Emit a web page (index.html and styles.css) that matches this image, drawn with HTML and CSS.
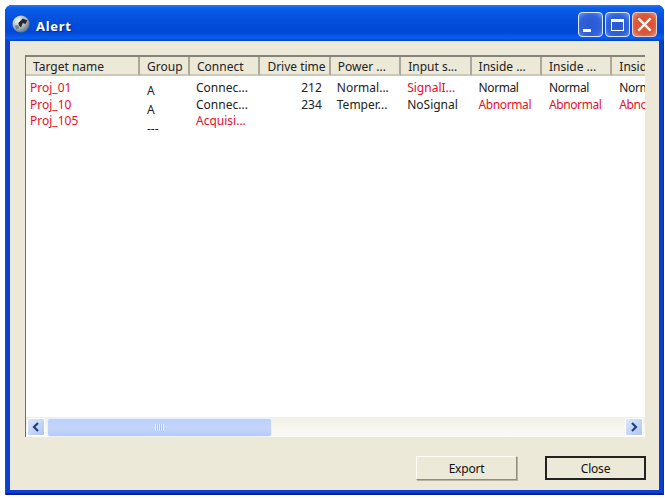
FILE: index.html
```html
<!DOCTYPE html>
<html lang="en">
<head>
<meta charset="utf-8">
<title>Alert</title>
<link rel="stylesheet" href="styles.css">
</head>
<body>
<div class="window">
  <div class="titlebar">
    <svg class="app-icon" width="18" height="18" viewBox="0 0 20 20">
      <defs><radialGradient id="g" cx="35%" cy="30%" r="75%"><stop offset="0" stop-color="#f4f6f8"/><stop offset=".6" stop-color="#a9b4bf"/><stop offset="1" stop-color="#5c6a78"/></radialGradient></defs>
      <circle cx="10" cy="10" r="9.5" fill="url(#g)"/>
      <path d="M7 9 L12 4 L17 6 L15 10 L12 9 L10 14 L8 12 Z" fill="#23262b"/>
      <path d="M3 12 L7 11 L8 15 L5 16 Z" fill="#6f7f90"/>
    </svg>
    <span class="title">Alert</span>
    <div class="caption-buttons">
      <div class="cap cap-min"><span class="min-glyph"></span></div>
      <div class="cap cap-max"><span class="max-glyph"></span></div>
      <div class="cap cap-close">
        <svg width="15" height="15" viewBox="0 0 14 14"><path d="M2 2 L12 12 M12 2 L2 12" stroke="#fff" stroke-width="2.2" stroke-linecap="square"/></svg>
      </div>
    </div>
  </div>
  <div class="client">
    <div class="list">
      <div class="columns">
        <div class="col c-name"><div class="head">Target name</div><div class="cell red">Proj_01</div><div class="cell red">Proj_10</div><div class="cell red">Proj_105</div></div>
        <div class="col c-group"><div class="head">Group</div><div class="cell tall">A</div><div class="cell tall">A</div><div class="cell tall">---</div></div>
        <div class="col c-std"><div class="head">Connect</div><div class="cell">Connec...</div><div class="cell">Connec...</div><div class="cell red">Acquisi...</div></div>
        <div class="col c-std"><div class="head">Drive time</div><div class="cell num">212</div><div class="cell num">234</div></div>
        <div class="col c-std"><div class="head">Power ...</div><div class="cell">Normal...</div><div class="cell">Temper...</div></div>
        <div class="col c-std"><div class="head">Input s...</div><div class="cell red">SignalI...</div><div class="cell">NoSignal</div></div>
        <div class="col c-std"><div class="head">Inside ...</div><div class="cell tight">Normal</div><div class="cell red tight">Abnormal</div></div>
        <div class="col c-std"><div class="head">Inside ...</div><div class="cell tight">Normal</div><div class="cell red tight">Abnormal</div></div>
        <div class="col c-last"><div class="head">Inside ...</div><div class="cell tight">Normal</div><div class="cell red tight">Abnormal</div></div>
      </div>
      <div class="hscroll">
        <div class="sbtn"><svg width="10" height="10" viewBox="0 0 10 10"><path d="M7 1 L3 5 L7 9" fill="none" stroke="#24407c" stroke-width="2.2"/></svg></div>
        <div class="thumb"><span class="grip"></span></div>
        <div class="track"></div>
        <div class="sbtn"><svg width="10" height="10" viewBox="0 0 10 10"><path d="M3 1 L7 5 L3 9" fill="none" stroke="#24407c" stroke-width="2.2"/></svg></div>
      </div>
    </div>
    <div class="actions">
      <button class="btn">Export</button>
      <button class="btn btn-default">Close</button>
    </div>
  </div>
</div>
</body>
</html>
```
FILE: styles.css
```css
html, body { margin: 0; padding: 0; background: #fff; }
body { width: 665px; height: 498px; overflow: hidden; font-family: "Noto Sans", "Liberation Sans", sans-serif; font-size: 12px; color: #111; }
.window { margin: 5px 0 0 5px; width: 659px; height: 490px; display: flex; flex-direction: column; background: #0a3fd0; border-radius: 7px 7px 0 0; box-shadow: inset 1px 0 0 #0a50e0, inset -1px 0 0 #0a2fa8, inset 0 -2px 0 #00209a; }
.titlebar { height: 36px; flex: none; display: flex; align-items: center; padding: 0 7px; border-radius: 7px 7px 0 0; box-sizing: border-box; background: linear-gradient(#2f7bf0 0, #0a5ee8 8%, #0450dc 40%, #0048d8 75%, #0a5ef0 92%, #0040c0 100%); }
.app-icon { flex: none; margin-top: 2px; }
.title { margin-left: 6px; margin-top: 5px; font-family: "Noto Sans", sans-serif; font-weight: 700; font-size: 13px; color: #fff; letter-spacing: .7px; text-shadow: 1px 1px 1px #0a2a80; }
.caption-buttons { margin-left: auto; display: flex; gap: 2px; align-self: flex-start; margin-top: 7px; }
.cap { width: 25px; height: 25px; box-sizing: border-box; border: 1px solid #dfe8fb; border-radius: 4px; display: flex; align-items: center; justify-content: center; background: radial-gradient(circle at 50% 55%, #2a58d0, #2f62dc 60%, #6f9af0); }
.cap-close { background: radial-gradient(circle at 50% 50%, #d9502f, #d9583a 60%, #ec9a80); border-color: #f4d0c4; }
.min-glyph { width: 8px; height: 3px; background: #fff; align-self: flex-end; margin: 0 8px 4px 0; }
.max-glyph { width: 13px; height: 12px; box-sizing: border-box; border: 1px solid #fff; border-top-width: 3px; }
.client { flex: 1; margin: 0 5px 5px 5px; background: #ece9d8; padding: 14px 13px 0 15px; display: flex; flex-direction: column; min-height: 0; }
.list { width: 620px; height: 382px; flex: none; display: flex; flex-direction: column; background: #fff; border-left: 1px solid #716f64; border-top: 2px solid #85827a; box-sizing: border-box; overflow: hidden; }
.columns { flex: 1; display: flex; min-height: 0; overflow: hidden; }
.col { flex: none; display: flex; flex-direction: column; }
.c-name { width: 114px; }
.c-group { width: 50px; }
.c-std { width: 70.4px; }
.c-last { width: 33px; }
.head { height: 19px; flex: none; box-sizing: border-box; padding: 0 0 0 7px; line-height: 20px; background: #ece9d8; border-right: 2px solid #aca899; border-bottom: 2px solid #cdc9b8; white-space: nowrap; overflow: hidden; margin-bottom: 4px; color: #222; }
.c-last .head { border-right: 0; }
.cell { height: 16.5px; line-height: 16.5px; padding-left: 6px; white-space: nowrap; overflow: hidden; color: #222; }
.cell.red { color: #e60f28; }
.cell.tight { letter-spacing: -.4px; padding-left: 7px; }
.cell.tall { height: 19px; line-height: 19px; padding-left: 7px; position: relative; top: 1px; }
.cell.num { text-align: right; padding: 0 9px 0 0; }
.c-name .cell { padding-left: 4px; }
.hscroll { height: 20px; flex: none; display: flex; align-items: center; padding: 0 2px 0 1px; background: linear-gradient(#f2f0e6, #fbfbf6); box-shadow: inset 0 -1px 0 #fff; }
.sbtn { width: 18px; height: 18px; flex: none; display: flex; align-items: center; justify-content: center; background: linear-gradient(135deg, #dfe8fb, #adc4f4); border: 1px solid #fff; border-radius: 2px; box-sizing: border-box; }
.thumb { width: 225px; height: 19px; margin-left: 2px; flex: none; box-sizing: border-box; display: flex; align-items: center; justify-content: center; border: 1px solid #eaf0fc; border-radius: 3px; background: linear-gradient(#bacffa, #c4d6fb 50%, #b4cbf8); }
.grip { width: 9px; height: 7px; background: repeating-linear-gradient(90deg, #eef3fe 0 1px, #a8bfef 1px 2px); }
.track { flex: 1; }
.actions { display: flex; justify-content: flex-end; gap: 28px; margin-top: 19px; }
.btn { width: 101px; height: 24px; box-sizing: border-box; padding: 0; font-family: "Noto Sans", "Liberation Sans", sans-serif; font-size: 12px; letter-spacing: -.2px; color: #111; background: #ece9d8; border: 1px solid; border-color: #fdfcf6 #8f8c7e #8f8c7e #fdfcf6; box-shadow: 1px 1px 0 #b8b4a4; }
.btn-default { border: 2px solid #222; box-shadow: none; }
```
